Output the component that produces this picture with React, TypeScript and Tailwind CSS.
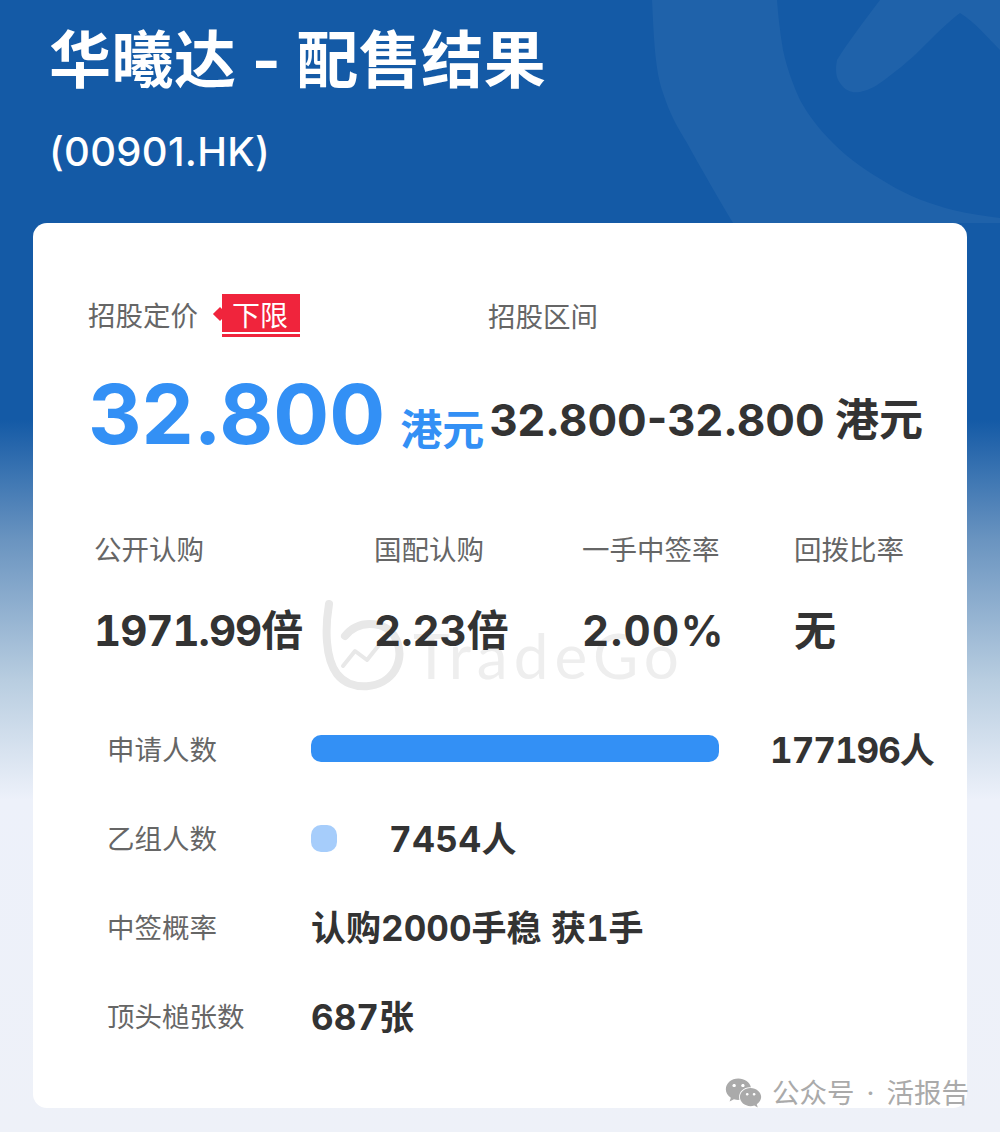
import { FaWeixin } from "react-icons/fa";
import type { ReactNode } from "react";

const font = "font-['Inter','Noto_Sans_CJK_SC',sans-serif]";

function Stat({ label, value, valueClass }: { label: string; value: string; valueClass: string }) {
  return (
    <div>
      <div className="text-[27.5px] leading-[40px] text-[#666666]">{label}</div>
      <div className={`mt-[31px] text-[42px] leading-[60px] font-bold tabular-nums text-[#333333] ${valueClass}`}>{value}</div>
    </div>
  );
}

function Row({ label, children }: { label: string; children: ReactNode }) {
  return (
    <div className="flex h-[89px] items-center pl-[74px]">
      <div className="w-[204px] shrink-0 text-[27.5px] text-[#666666]">{label}</div>
      {children}
    </div>
  );
}

export default function App() {
  return (
    <div className={`relative h-[1132px] w-[1000px] overflow-hidden bg-[linear-gradient(180deg,#145aa6_0px,#145aa6_420px,#6a94c0_540px,#b8cde0_680px,#edf1fa_800px,#eef1f8_100%)] ${font}`}>
      <svg className="absolute left-0 top-0" width="1000" height="223" viewBox="0 0 1000 223" fill="none">
        <path d="M652 0 C654 40 655 70 663 93 C670 115 678 128 687 143 C702 170 718 198 733 223 L1000 223 L1000 218 C985 216 970 214 953 210 C930 204 908 196 887 183 C868 172 850 160 833 143 C820 130 808 115 800 100 C792 82 787 68 783 50 C780 32 778 15 777 0 Z" fill="#1f62aa" />
        <path d="M880 0 C865 20 848 42 837 60 C835 70 836 78 840 83 C846 92 853 93 860 92 C870 90 878 85 887 78 C900 68 910 60 920 50 C935 35 948 22 960 13 C975 22 988 38 1000 50 L1000 0 Z" fill="#1f62aa" />
      </svg>

      <div className="relative px-[33px]">
        <div className="h-[223px] pl-[16px] pt-[23px] text-white">
          <h1 className="text-[62px] leading-[76px] font-bold tracking-[0.5px]">华曦达 - 配售结果</h1>
          <p className="mt-[31px] text-[40px] leading-[44px] font-medium tracking-[0.3px]">(00901.HK)</p>
        </div>

        <div className="relative h-[885px] rounded-[14px] bg-white">
          <div className="absolute left-[288px] top-[375px] flex items-start">
            <svg width="84" height="96" viewBox="0 0 84 96" fill="none" stroke="#e8e8e8" strokeWidth="8" strokeLinecap="round" strokeLinejoin="round">
              <path d="M8 6 C4 30 4 60 16 76 C30 94 62 92 74 72 C84 54 76 32 58 27 C44 24 32 28 24 38" />
              <path d="M22 68 L34 53 L46 62 L62 42" strokeWidth="4" />
            </svg>
            <span className="ml-[8px] mt-[22px] font-['Lato',sans-serif] text-[62px] leading-[70px] tracking-[6px] text-[#eeeeee]">TradeGo</span>
          </div>

          <div className="relative">
            <div className="flex h-[114px] items-end pl-[55px]">
              <div className="flex w-[400px] items-center text-[27.5px] leading-[40px] text-[#666666]">
                <span>招股定价</span>
                <div className="relative ml-[24px] w-[78px]">
                  <span className="absolute left-[-7px] top-[15px] h-[10px] w-[10px] rotate-45 bg-[#f0243c]" />
                  <div className="relative h-[38px] bg-[#f0243c] pl-[10px] text-[28px] leading-[44px] text-white">下限</div>
                  <div className="mt-[2px] h-[3px] bg-[#f0243c]" />
                </div>
              </div>
              <span className="text-[27.5px] leading-[40px] text-[#666666]">招股区间</span>
            </div>

            <div className="mt-[33px] flex h-[100px] items-center pl-[55px]">
              <span className="mb-[12px] text-[83px] leading-[100px] font-bold text-[#3390f5]">32.800</span>
              <span className="ml-[15px] mt-[20px] w-[89px] text-[42px] leading-[50px] font-bold text-[#3390f5]">港元</span>
              <span className="text-[44px] leading-[50px] font-bold whitespace-nowrap text-[#333333]">32.800-32.800 港元</span>
            </div>

            <div className="mt-[60px] grid grid-cols-[280px_208px_212px_1fr] pl-[61px]">
              <Stat label="公开认购" value="1971.99倍" valueClass="tracking-[-1px]" />
              <Stat label="国配认购" value="2.23倍" valueClass="tracking-[0px]" />
              <Stat label="一手中签率" value="2.00%" valueClass="tracking-[1.5px]" />
              <Stat label="回拨比率" value="无" valueClass="tracking-[0px]" />
            </div>

            <div className="mt-[45px] text-[#333333]">
              <Row label="申请人数">
                <div className="mb-[4px] h-[27px] w-[408px] rounded-[10px] bg-[#3390f5]" />
                <span className="ml-[51px] text-[35px] font-bold tabular-nums tracking-[-1px]">177196人</span>
              </Row>
              <Row label="乙组人数">
                <div className="mb-[2px] h-[27px] w-[26px] rounded-[10px] bg-[#a6cdfb]" />
                <span className="ml-[52px] text-[35px] font-bold tabular-nums tracking-[0.5px]">7454人</span>
              </Row>
              <Row label="中签概率">
                <span className="text-[35px] font-bold tabular-nums">认购2000手稳 获1手</span>
              </Row>
              <Row label="顶头槌张数">
                <span className="text-[35px] font-bold tabular-nums">687张</span>
              </Row>
            </div>
          </div>

          <div className="absolute left-[692px] top-[852px] flex items-center text-[#aaaaaa]">
            <FaWeixin className="h-[36px] w-[37px]" />
            <span className="ml-[10px] whitespace-nowrap text-[27.5px] leading-[32px]">公众号</span>
            <span className="ml-[12px] text-[27.5px] leading-[32px]">·</span>
            <span className="ml-[12px] whitespace-nowrap text-[27.5px] leading-[32px]">活报告</span>
          </div>
        </div>
      </div>
    </div>
  );
}
